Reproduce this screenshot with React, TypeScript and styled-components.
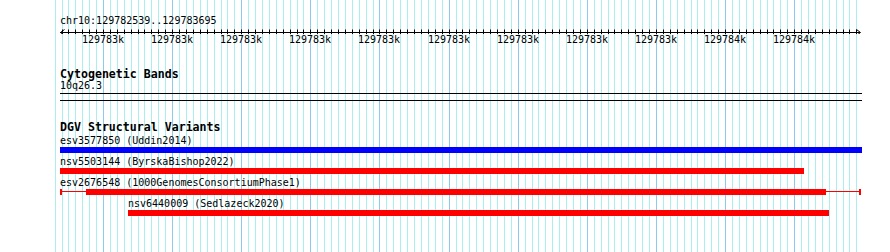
import React from "react";
import styled, { createGlobalStyle } from "styled-components";

const GlobalStyle = createGlobalStyle`
  html, body { margin: 0; padding: 0; background: #ffffff; }
  body { font-family: "DejaVu Sans Mono", "Liberation Mono", monospace; color: #000; }
`;

const MAJOR_X = 103; // x of 129782600
const PX_PER_BP = 0.6912;
const LEFT = 60;
const bpToX = (bp: number) => MAJOR_X + (bp - 129782600) * PX_PER_BP;

const gridBps: number[] = [];
for (let bp = 129782530; bp <= 129783690; bp += 10) gridBps.push(bp);
const majorBps: number[] = [];
for (let bp = 129782600; bp <= 129783600; bp += 100) majorBps.push(bp);

type Feature = {
  name: string;
  study: string;
  start: number;
  end: number;
  color: string;
  whisker?: [number, number];
};

const features: Feature[] = [
  { name: "esv3577850", study: "Uddin2014", start: 60, end: 862, color: "#0000ff" },
  { name: "nsv5503144", study: "ByrskaBishop2022", start: 60, end: 804, color: "#ff0000" },
  { name: "esv2676548", study: "1000GenomesConsortiumPhase1", start: 86, end: 826, color: "#ff0000", whisker: [60, 861] },
  { name: "nsv6440009", study: "Sedlazeck2020", start: 128, end: 829, color: "#ff0000" },
];

const Page = styled.div`
  position: relative;
  width: 890px;
  height: 252px;
  overflow: hidden;
  background: #ffffff;
`;

const GridLayer = styled.svg`
  position: absolute;
  left: 0;
  top: 0;
  width: 890px;
  height: 252px;
  z-index: 0;
`;

const Content = styled.div`
  position: relative;
  z-index: 1;
  padding-left: ${LEFT}px;
  width: 802px;
  display: flex;
  flex-direction: column;
`;

const Ruler = styled.div`
  display: flex;
  flex-direction: column;
  padding-top: 15px;
`;

const Mono = styled.div`
  font-size: 10px;
  line-height: 12px;
  height: 12px;
  white-space: pre;
`;

const AxisSvg = styled.svg`
  display: block;
  width: 802px;
  height: 7px;
`;

const TickRow = styled.div`
  position: relative;
  height: 12px;
`;

const TickLabel = styled.span`
  position: absolute;
  top: 0;
  font-size: 10px;
  line-height: 12px;
  transform: translateX(-50%);
  white-space: pre;
`;

const TrackTitle = styled.div<{ $gap: number }>`
  margin-top: ${(p) => p.$gap}px;
  font-size: 11.6px;
  font-weight: bold;
  line-height: 12px;
  height: 12px;
  white-space: pre;
`;

const Rule = styled.div<{ $gap: number }>`
  margin-top: ${(p) => p.$gap}px;
  height: 1px;
  background: #000;
  width: 802px;
`;

const FeatureList = styled.div`
  margin-top: 2px;
  display: flex;
  flex-direction: column;
`;

const FeatureRow = styled.div`
  position: relative;
  height: 21px;
`;

const FeatureLabel = styled.div`
  font-size: 10px;
  line-height: 12px;
  height: 12px;
  white-space: pre;
`;

const BarLine = styled.div`
  position: relative;
  height: 6px;
`;

const Bar = styled.div<{ $color: string }>`
  position: absolute;
  top: 0;
  height: 6px;
  background: ${(p) => p.$color};
`;

const Whisker = styled.div<{ $color: string }>`
  position: absolute;
  top: 2px;
  height: 1px;
  background: ${(p) => p.$color};
  &::before, &::after {
    content: "";
    position: absolute;
    top: -2px;
    width: 2px;
    height: 6px;
    background: ${(p) => p.$color};
  }
  &::before { left: 0; }
  &::after { right: 0; }
`;

function Grid() {
  return (
    <GridLayer viewBox="0 0 890 252">
      {gridBps.map((bp) => {
        const x = Math.round(bpToX(bp)) + 0.5;
        const major = bp % 100 === 0;
        return (
          <line
            key={bp}
            x1={x}
            x2={x}
            y1={0}
            y2={252}
            stroke={major ? "#8ccaf0" : "#aaeef0"}
            strokeWidth={1}
          />
        );
      })}
    </GridLayer>
  );
}

function Axis() {
  const ticks = gridBps.filter((bp) => bpToX(bp) >= 61 && bpToX(bp) <= 857);
  return (
    <AxisSvg viewBox="0 0 802 7">
      <line x1={0} x2={800} y1={5.5} y2={5.5} stroke="#000" strokeWidth={1} />
      {ticks.map((bp) => {
        const x = Math.round(bpToX(bp)) - LEFT + 0.5;
        return <line key={bp} x1={x} x2={x} y1={2.5} y2={7} stroke="#000" strokeWidth={1} />;
      })}
      <polyline points="4.5,2.5 0.5,5.5 4.5,8.5" fill="none" stroke="#000" strokeWidth={1} />
      <polyline points="796.5,2.5 800.5,5.5 796.5,8.5" fill="none" stroke="#000" strokeWidth={1} />
    </AxisSvg>
  );
}

export default function App() {
  return (
    <Page>
      <GlobalStyle />
      <Grid />
      <Content>
        <Ruler>
          <Mono>chr10:129782539..129783695</Mono>
          <Axis />
          <TickRow>
            {majorBps.map((bp) => (
              <TickLabel key={bp} style={{ left: Math.round(bpToX(bp)) - LEFT }}>
                {Math.round(bp / 1000)}k
              </TickLabel>
            ))}
          </TickRow>
        </Ruler>

        <TrackTitle $gap={22}>Cytogenetic Bands</TrackTitle>
        <Mono>10q26.3</Mono>
        <Rule $gap={1} />
        <Rule $gap={6} />

        <TrackTitle $gap={20}>DGV Structural Variants</TrackTitle>
        <FeatureList>
          {features.map((f) => {
            const labelStart = f.whisker ? f.whisker[0] : f.start;
            return (
              <FeatureRow key={f.name}>
                <FeatureLabel style={{ paddingLeft: labelStart - LEFT }}>
                  {f.name} ({f.study})
                </FeatureLabel>
                <BarLine>
                  {f.whisker && (
                    <Whisker
                      $color={f.color}
                      style={{ left: f.whisker[0] - LEFT, width: f.whisker[1] - f.whisker[0] }}
                    />
                  )}
                  <Bar $color={f.color} style={{ left: f.start - LEFT, width: f.end - f.start }} />
                </BarLine>
              </FeatureRow>
            );
          })}
        </FeatureList>
      </Content>
    </Page>
  );
}
